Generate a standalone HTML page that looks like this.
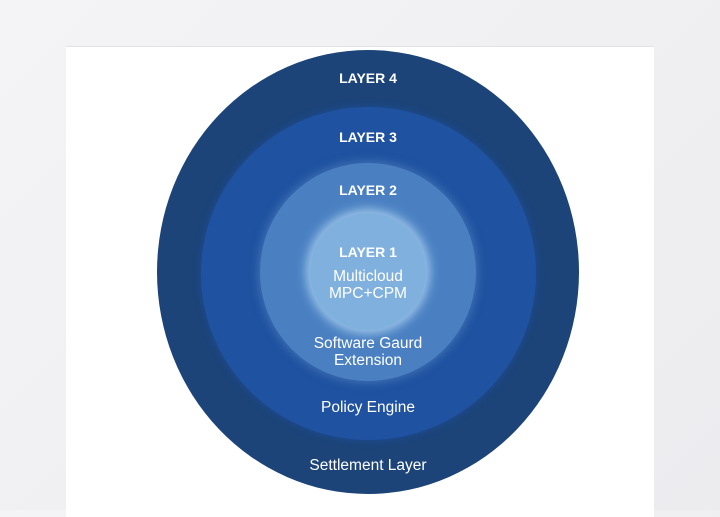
<!DOCTYPE html>
<html><head><style>
body{margin:0;width:720px;height:510px;overflow:hidden;background:linear-gradient(135deg,#f4f4f6,#ececef);font-family:"Liberation Sans",sans-serif;position:relative}
.panel{position:absolute;left:66px;top:46px;width:588px;height:470px;background:#fff;border-top:1px solid #e2e2e6}
.e{position:absolute;border-radius:50%}
.t{position:absolute;left:8px;width:720px;text-align:center;color:#fff;font-size:15.5px;line-height:17px}
.b{font-weight:bold;font-size:14px}
</style></head><body>
<div class="panel"></div>
<div class="e" style="left:157px;top:50px;width:422px;height:444px;background:#1c4479"></div>
<div class="e" style="left:201px;top:107px;width:335px;height:333px;background:#1f52a0;box-shadow:0 0 6px 2px #1d4a8c"></div>
<div class="e" style="left:260px;top:163px;width:216px;height:218px;background:#4a80c2;box-shadow:0 0 8px 3px #3a6cb0"></div>
<div class="e" style="left:310px;top:213px;width:116px;height:117px;background:#80b1de;box-shadow:0 0 10px 4px #9cc4e8"></div>
<div class="t b" style="top:70px">LAYER 4</div>
<div class="t b" style="top:129px">LAYER 3</div>
<div class="t b" style="top:182px">LAYER 2</div>
<div class="t b" style="top:244px">LAYER 1</div>
<div class="t" style="top:268px">Multicloud</div>
<div class="t" style="top:285px">MPC+CPM</div>
<div class="t" style="top:335px">Software Gaurd</div>
<div class="t" style="top:352px">Extension</div>
<div class="t" style="top:399px">Policy Engine</div>
<div class="t" style="top:457px">Settlement Layer</div>
</body></html>
